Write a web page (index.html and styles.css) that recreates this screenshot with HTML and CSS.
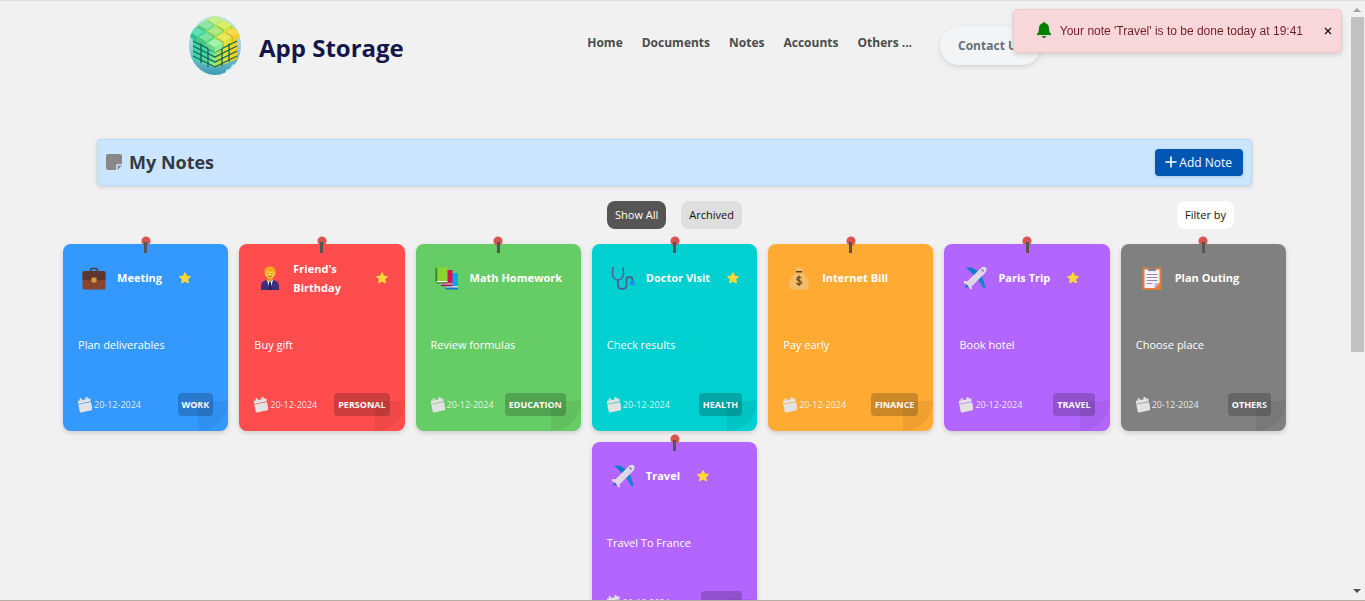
FILE: index.html
```html
<!DOCTYPE html>
<html lang="en">
<head>
<meta charset="utf-8">
<title>App Storage - My Notes</title>
<link rel="stylesheet" href="styles.css">
</head>
<body>
<svg class="sprite" aria-hidden="true">
  <defs>
    <linearGradient id="sky" x1="0" y1="0" x2="0" y2="1"><stop offset="0" stop-color="#c2e6dc"/><stop offset=".5" stop-color="#9bd4dc"/><stop offset="1" stop-color="#3a9cb4"/></linearGradient>
    <linearGradient id="left-face" x1="0" y1="0" x2="1" y2="1"><stop offset="0" stop-color="#2fd3a0"/><stop offset=".6" stop-color="#45d6a2"/><stop offset="1" stop-color="#9cec86"/></linearGradient>
    <linearGradient id="right-face" x1="0" y1="0" x2="1" y2="0"><stop offset="0" stop-color="#9fdc50"/><stop offset=".5" stop-color="#e5e02c"/><stop offset="1" stop-color="#f8c91c"/></linearGradient>
  </defs>
  <symbol id="block" viewBox="-9 -6 18 16" overflow="visible"><path d="M-7.500 0Q-8 0-7.500.5V5L0 9.500 7.500 5V0L0-4.800z" fill="currentColor"/><path d="M-7.500 0L0 4.500V9.500L-7.500 5z" fill="#067a62" fill-opacity=".22"/><path d="M-7 0L0-4.500 7 0 0 4.300z" fill="#fff" fill-opacity=".22"/></symbol>
  <symbol id="briefcase" viewBox="0 0 24 24"><path d="M8.500 7V4.500q0-2 2-2h3q2 0 2 2V7" fill="none" stroke="#45413f" stroke-width="1.500"/><rect x=".5" y="5.500" width="23" height="18" rx="1.500" fill="#87452f"/><path d="M2 5h20q1.500 0 1.500 1.500V12q0 2-2 2h-19q-2 0-2-2V6.500Q.5 5 2 5z" fill="#5f362d"/><rect x="9.500" y="11.500" width="5" height="5" rx="1" fill="#d69a4a"/></symbol>
  <symbol id="person" viewBox="0 0 24 24"><path d="M3 24v-4q0-5 6-6h6q6 1 6 6v4z" fill="#3d3080"/><path d="M9 14l3 10 3-10z" fill="#eef0ff"/><path d="M11.200 15.500h1.600l.8 8.500h-3.200z" fill="#22264f"/><rect x="9.500" y="10.500" width="5" height="5" rx="2" fill="#e99b1c"/><circle cx="12" cy="7.500" r="5" fill="#ffc83d"/><path d="M6.500 9Q5.500 0 12 .5 18.500 0 17.500 9q-1-1-1.500-3.500Q11 6 9 4.500 8 7 6.500 9z" fill="#f7a51c"/><path d="M9.500 7.500h1M13.500 7.500h1M10.300 10.200q1.700 1 3.400 0" fill="none" stroke="#704818" stroke-width=".8"/></symbol>
  <symbol id="books" viewBox="0 0 24 24"><path d="M11 8l12-1v15H11z" fill="#10a5e8"/><path d="M10 20h13v2.500H11z" fill="#cfe4f5"/><path d="M10 21.500h13v2H11z" fill="#127ac9"/><path d="M6 4h11.500v13.500L7 18z" fill="#d41458"/><path d="M5 17.500h12.500v1.500H6z" fill="#f2e8ef"/><path d="M5.500 18.500h12v1.700h-11z" fill="#9f1246"/><path d="M.8 1.500L12.500 1v14H2z" fill="#86d72f"/><path d="M.5 1.500l1.700 1V17L.5 15z" fill="#357b2d"/><path d="M1.500 15h11v1.500h-10z" fill="#f6f6ef"/><path d="M1.500 16.500h11v1h-11z" fill="#2d6b27"/></symbol>
  <symbol id="stethoscope" viewBox="0 0 24 24"><path d="M3.500 2H2q-1.500 8 1.500 10.500 3.500 3 7 0Q13.500 10 12 2h-1.500" fill="none" stroke="#50618f" stroke-width="1.600"/><path d="M3 1.500L5 3M9 3l2.500-1.500" stroke="#20c7ed" stroke-width="1.800"/><path d="M7 14v5q0 4 4 4 4.500 0 4.500-4v-5q0-3 3-3t3 3v2" fill="none" stroke="#50618f" stroke-width="1.800"/><circle cx="21.300" cy="17" r="2.500" fill="#168df4"/></symbol>
  <symbol id="moneybag" viewBox="0 0 24 24"><path d="M8 1.500L10 2l2-1.500L14 2l2-.5-1.500 4q7 6 7.500 13 0 5-5 5H7q-5 0-5-5 .5-7 7.500-13z" fill="#f2bc69"/><path d="M9 5h6v1.500H9z" fill="#654127"/><path d="M14.300 12.300q-.6-1.300-2.400-1.300-2 .2-2 1.800.2 1.400 2.200 1.800 2.300.4 2.300 2 0 1.800-2.400 1.800-1.900 0-2.500-1.600M12 9.500v10.500" fill="none" stroke="#614022" stroke-width="1.200"/></symbol>
  <symbol id="plane" viewBox="0 0 24 24"><path d="M3 1.500h5.500L18 7l-5 4z" fill="#087dc8"/><path d="M15.500 7.500l4 4 3 10-1.500 1.500-7-11z" fill="#1383cb"/><path d="M2 22l3.500-1 2-4-3-2z" fill="#1674b8"/><path d="M18 2q3-2 5-.5 1.500 2-.5 5L8.500 20.500 9 23l-1.500.5-2.500-4-4.500-3L1 15l3.500.3z" fill="#dfd7e7"/><path d="M18.500 3.500l2 2" stroke="#777899" stroke-width="1.300"/></symbol>
  <symbol id="clipboard" viewBox="0 0 24 24"><rect x="2.500" y="1.500" width="19" height="22.500" rx="1.500" fill="#dc7d3d"/><path d="M4.500 3.500h15V17l-5 5h-10z" fill="#f5f1fb"/><path d="M19.500 17h-5v5z" fill="#c6bad2"/><path d="M8 5V2.500h2Q10 .5 12 .5t2 2h2V5z" fill="#858390"/><path d="M6.500 8.500h11M6.500 11.500h11M6.500 14.500h11M6.500 17.500h6" stroke="#958aa7"/></symbol>
  <symbol id="star" viewBox="0 0 12 12"><path d="M6 .8l1.500 3.300 3.700.4-2.700 2.500.8 3.700L6 8.900l-3.300 1.800.8-3.700L.8 4.500l3.700-.4z" fill="#fdd835" stroke="#fdd835" stroke-width="1.200" stroke-linejoin="round"/></symbol>
  <symbol id="calendar" viewBox="0 0 14 16"><g transform="rotate(-12 7 8)" fill="#e2e2e2"><path d="M.5 2.500h2.500V.5h2v2h4v-2h2v2h2.500v3H.5z"/><path d="M.5 6.200h13V13q0 1.500-1.500 1.500H2Q.5 14.500.5 13z"/></g></symbol>
</svg>
<div class="window">
  <div class="page">
    <header class="header">
      <div class="brand">
        <svg class="logo" viewBox="0 0 52 59" aria-hidden="true">
          <clipPath id="oval"><ellipse cx="26" cy="29.500" rx="26" ry="29.500"/></clipPath>
          <g clip-path="url(#oval)">
            <rect width="52" height="59" fill="url(#sky)"/>
            <path d="M4 18l22 11v23L4 44z" fill="url(#left-face)"/>
            <path d="M26 29l22-11v25L26 52z" fill="url(#right-face)"/>
            <g fill="none" stroke="#14635a" stroke-width="1.300">
              <path d="M4 25l22 11 22-11M4 30l22 11 22-11M4 35l22 11 22-11M4 40l22 11 22-11"/>
              <path d="M12 22v25M19 26v25M33 26v24M40 22v24"/>
            </g>
            <path d="M4 14L26 1l22 13v7L26 34 4 21z" fill="#157a56"/>
            <use href="#block" x="17" y="-2" width="18" height="16" color="#b6ec6c"/>
            <use href="#block" x="8" y="3" width="18" height="16" color="#6fe08b"/>
            <use href="#block" x="26" y="3" width="18" height="16" color="#cfe83f"/>
            <use href="#block" x="-1" y="10" width="18" height="16" color="#35d69f"/>
            <use href="#block" x="17" y="9" width="18" height="16" color="#9be566"/>
            <use href="#block" x="35" y="10" width="18" height="16" color="#f5cf26"/>
            <use href="#block" x="8" y="15" width="18" height="16" color="#5cdc86"/>
            <use href="#block" x="26" y="15" width="18" height="16" color="#e3e033"/>
            <use href="#block" x="17" y="21" width="18" height="16" color="#8bef95"/>
            <path d="M37 54q5-1 6-5 4-2 9-2v12H36z" fill="#d8eff3"/>
          </g>
        </svg>
        <span class="brand-name">App Storage</span>
      </div>
      <nav class="nav">
        <a href="#">Home</a><a href="#">Documents</a><a href="#">Notes</a><a href="#">Accounts</a><a href="#">Others ...</a>
        <a class="contact" href="#">Contact Us</a>
      </nav>
    </header>
    <main>
      <section class="title-bar">
        <svg class="note-icon" viewBox="0 0 16 16" aria-hidden="true"><path d="M2 0h12q2 0 2 2v8h-4q-2 0-2 2v4H2q-2 0-2-2V2Q0 0 2 0z" fill="#888"/><path d="M16 11.500L11.500 16v-3.500q0-1 1-1z" fill="#888"/></svg>
        <h1>My Notes</h1>
        <button class="add" type="button"><svg viewBox="0 0 12 12" aria-hidden="true"><path d="M6 1v10M1 6h10" stroke="#fff" stroke-width="1.600" stroke-linecap="round"/></svg>Add Note</button>
      </section>
      <div class="filters">
        <div class="tabs"><button class="pill active" type="button">Show All</button><button class="pill" type="button">Archived</button></div>
        <button class="pill filter" type="button">Filter by</button>
      </div>
      <section class="notes">
        <article class="card work"><div class="card-head"><svg class="icon"><use href="#briefcase"/></svg><h2>Meeting</h2><svg class="star"><use href="#star"/></svg></div><p>Plan deliverables</p><div class="card-foot"><svg class="cal"><use href="#calendar"/></svg><time>20-12-2024</time><span class="tag">WORK</span></div></article>
        <article class="card personal"><div class="card-head"><svg class="icon"><use href="#person"/></svg><h2>Friend's Birthday</h2><svg class="star"><use href="#star"/></svg></div><p>Buy gift</p><div class="card-foot"><svg class="cal"><use href="#calendar"/></svg><time>20-12-2024</time><span class="tag">PERSONAL</span></div></article>
        <article class="card education"><div class="card-head"><svg class="icon"><use href="#books"/></svg><h2>Math Homework</h2></div><p>Review formulas</p><div class="card-foot"><svg class="cal"><use href="#calendar"/></svg><time>20-12-2024</time><span class="tag">EDUCATION</span></div></article>
        <article class="card health"><div class="card-head"><svg class="icon"><use href="#stethoscope"/></svg><h2>Doctor Visit</h2><svg class="star"><use href="#star"/></svg></div><p>Check results</p><div class="card-foot"><svg class="cal"><use href="#calendar"/></svg><time>20-12-2024</time><span class="tag">HEALTH</span></div></article>
        <article class="card finance"><div class="card-head"><svg class="icon"><use href="#moneybag"/></svg><h2>Internet Bill</h2></div><p>Pay early</p><div class="card-foot"><svg class="cal"><use href="#calendar"/></svg><time>20-12-2024</time><span class="tag">FINANCE</span></div></article>
        <article class="card travel"><div class="card-head"><svg class="icon"><use href="#plane"/></svg><h2>Paris Trip</h2><svg class="star"><use href="#star"/></svg></div><p>Book hotel</p><div class="card-foot"><svg class="cal"><use href="#calendar"/></svg><time>20-12-2024</time><span class="tag">TRAVEL</span></div></article>
        <article class="card others"><div class="card-head"><svg class="icon"><use href="#clipboard"/></svg><h2>Plan Outing</h2></div><p>Choose place</p><div class="card-foot"><svg class="cal"><use href="#calendar"/></svg><time>20-12-2024</time><span class="tag">OTHERS</span></div></article>
        <article class="card travel"><div class="card-head"><svg class="icon"><use href="#plane"/></svg><h2>Travel</h2><svg class="star"><use href="#star"/></svg></div><p>Travel To France</p><div class="card-foot"><svg class="cal"><use href="#calendar"/></svg><time>20-12-2024</time><span class="tag">TRAVEL</span></div></article>
      </section>
    </main>
  </div>
  <div class="scrollbar" aria-hidden="true">
    <svg viewBox="0 0 16 16"><path d="M4 11l4-4 4 4z" fill="#a3a3a3"/></svg>
    <div class="thumb"></div>
    <svg viewBox="0 0 16 16"><path d="M4 5l4 4 4-4z" fill="#505050"/></svg>
  </div>
</div>
<div class="toast" role="alert">
  <svg class="bell" viewBox="0 0 14 16" aria-hidden="true"><path d="M7 0q1 0 1 1.100Q12 2 12 6.500q0 3.500 2 5.500v1H0v-1q2-2 2-5.500Q2 2 6 1.100 6 0 7 0zM5 14h4q0 2-2 2t-2-2z" fill="#008000"/></svg>
  <span>Your note 'Travel' is to be done today at 19:41</span>
  <button type="button" aria-label="Close"><svg viewBox="0 0 8 8"><path d="M1 1l6 6M7 1L1 7" stroke="#111" stroke-width="1.200"/></svg></button>
</div>
</body>
</html>
```
FILE: styles.css
```css
* { box-sizing: border-box; }
body { margin: 0; background: #f1f1f1; font-family: "Open Sans", sans-serif; color: #343a40; overflow: hidden; }
button { font-family: inherit; border: 0; cursor: pointer; }
a { text-decoration: none; }
.sprite { position: absolute; width: 0; height: 0; }
svg { display: block; flex: none; }
.window { display: flex; height: 100vh; border-top: 1px solid #dedede; border-bottom: 1px solid #b5aca4; }
.page { flex: 1; min-width: 0; overflow: hidden; }

.header { display: flex; justify-content: space-between; align-items: flex-start; padding: 15px 308px 0 189px; height: 138px; }
.brand { display: flex; align-items: center; gap: 18px; }
.logo { width: 52px; height: 59px; }
.brand-name { font-size: 24px; font-weight: 700; line-height: 32px; color: #14174a; padding-top: 5px; white-space: nowrap; }
.nav { display: flex; gap: 19px; padding-top: 11px; white-space: nowrap; }
.nav a { font-size: 12px; font-weight: 700; line-height: 32px; color: #4b4b4b; }
.nav .contact { margin-left: 9px; padding: 3px 18px; height: 38px; border-radius: 19px; background: #f3f4f5; color: #66707a; box-shadow: 0 2px 5px rgba(0, 0, 0, .12); }

.title-bar { display: flex; align-items: center; max-width: 1155px; height: 47px; margin: 0 auto; padding: 0 8px; background: #cce5ff; border: 1px solid #b8daff; border-radius: 4px; box-shadow: 0 1px 4px rgba(0, 0, 0, .15); }
.note-icon { width: 16px; height: 16px; margin-bottom: 2px; }
.title-bar h1 { flex: 1; margin: 0 0 2px 7px; font-size: 18px; line-height: 24px; }
.add { display: flex; align-items: center; gap: 2px; height: 27px; padding: 0 11px 1px 10px; border-radius: 4px; background: #0056b3; color: #fff; font-size: 12px; box-shadow: 0 1px 3px rgba(0, 0, 0, .15); }
.add svg { width: 12px; height: 12px; }

.filters { display: grid; grid-template-columns: 1fr auto 1fr; max-width: 1155px; margin: 15px auto; padding: 0 18px; }
.tabs { grid-column: 2; display: flex; gap: 15px; }
.pill { height: 28px; padding: 0 8px 2px; border-radius: 8px; background: #dedede; color: #111; font-size: 11px; }
.pill.active { background: #555; color: #fff; }
.pill.filter { justify-self: end; background: #fff; }

.notes { display: flex; flex-wrap: wrap; justify-content: center; gap: 11px; max-width: 1223px; margin: 0 auto; }
.card { position: relative; display: flex; flex-direction: column; flex: 0 0 calc((100% - 66px) / 7); height: 187px; padding: 15px; border-radius: 8px; color: #fff; box-shadow: 0 2px 5px rgba(0, 0, 0, .15); }
.card::before { content: ""; position: absolute; top: -8px; left: 50%; width: 10px; height: 17px; margin-left: -5px; background: linear-gradient(#555, #555) 50% 100% / 3px 11px no-repeat, radial-gradient(circle at 5px 5px, #d9534f 4px, transparent 5px); }
.card::after { content: ""; position: absolute; right: 0; bottom: 0; width: 30px; height: 30px; border-radius: 0 0 30px 0; background: rgba(0, 0, 0, .06); }
.work { background: #39f; }
.personal { background: #ff4d4d; }
.education { background: #6c6; }
.health { background: #00d0d0; }
.finance { background: #fa3; }
.travel { background: #b366ff; }
.others { background: #808080; }
.card-head { display: flex; align-items: center; height: 38px; padding-left: 4px; }
.icon { width: 24px; height: 24px; }
.card-head h2 { margin: 0 0 1px 11px; font-size: 11px; line-height: 19px; }
.star { width: 12px; height: 12px; margin-left: 17px; }
.personal h2 { flex: 1; }
.personal .star { margin-right: 2px; }
.card p { margin: 38px 0 0; font-size: 11px; line-height: 20px; }
.card-foot { display: flex; align-items: center; margin-top: auto; height: 23px; }
.cal { width: 14px; height: 16px; }
.card-foot time { margin-left: 2px; font-size: 9px; line-height: 16px; color: rgba(255, 255, 255, .85); }
.tag { margin-left: auto; padding: 0 4px; border-radius: 4px; background: rgba(0, 0, 0, .2); font-size: 9px; font-weight: 700; line-height: 23px; }

.scrollbar { display: flex; flex-direction: column; width: 16px; background: #f1f1f1; }
.scrollbar svg { width: 16px; height: 16px; }
.thumb { flex: none; width: 13px; height: 56%; margin: 0 1px auto 2px; background: #c1c1c1; }

.toast { position: fixed; top: 9px; right: 23px; display: flex; align-items: center; height: 44px; padding: 0 9px 0 23px; background: #f8d7da; border: 1px solid #f5c6cb; border-radius: 5px; color: #721c24; font: 12px "Liberation Sans", sans-serif; white-space: nowrap; box-shadow: 0 2px 5px rgba(0, 0, 0, .15); }
.bell { width: 14px; height: 16px; margin: 0 9px 2px 0; }
.toast button { margin-left: 21px; padding: 0; background: none; }
.toast button svg { width: 8px; height: 8px; }
```
